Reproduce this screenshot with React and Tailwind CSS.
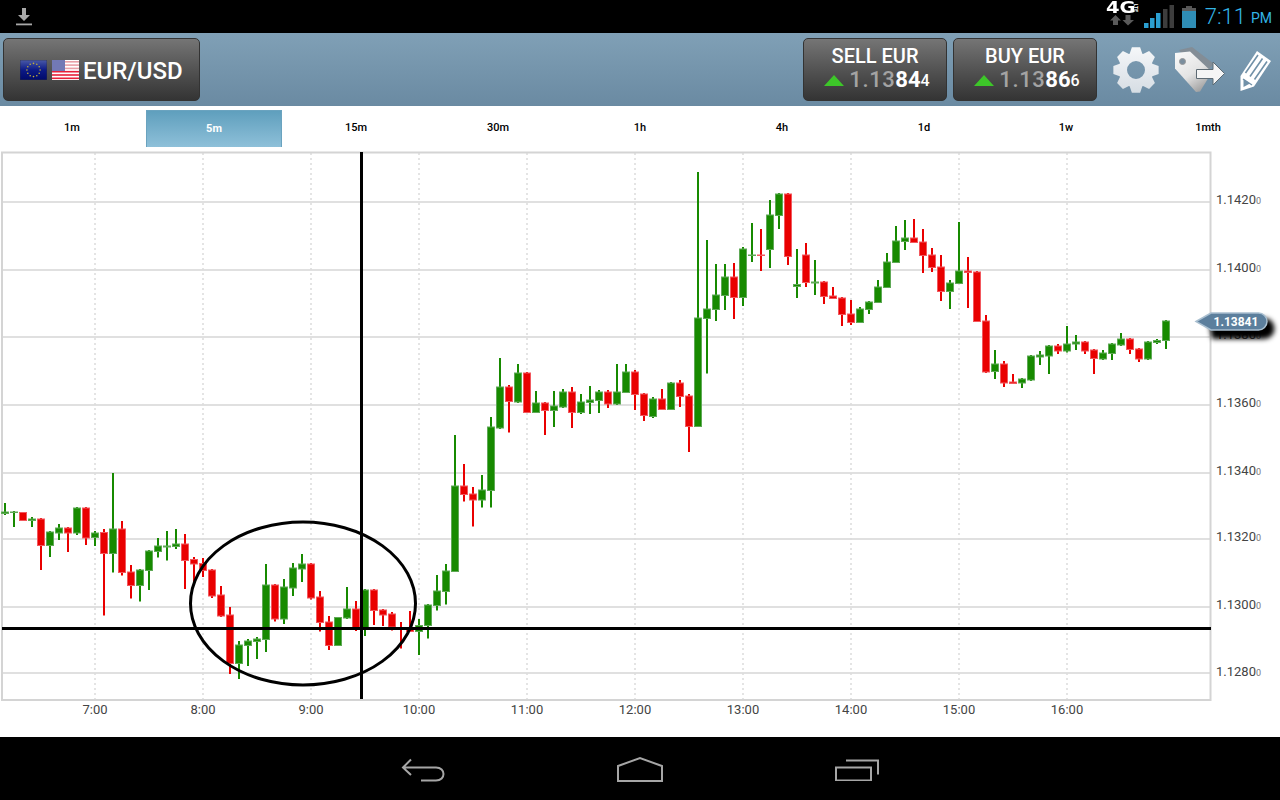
import React from "react";

const C = [
['g',503,511.5,514,515],['g',511,511.5,513,527],['r',512,512,521,521],['g',517,518.5,521,527],['r',518,518.5,546,570],
['g',531,531.5,546,557],['g',524,527.5,533.5,540],['r',527,527.5,533.5,552],['g',507,507.5,533.5,535],['r',507,507.5,538.5,545],
['g',531,532.5,538,546],['r',529,532,554,615.5],['g',473,528.5,554,572.5],['r',521,528.5,573,575.5],['r',565,571.5,586,598.5],
['g',569,569.5,586,601.5],['g',550,550.5,571,590],['g',538,545.5,552,557.5],['g',531,545.5,547.5,560.5],['g',529,543.5,547,549],
['r',534,543.5,561,589],['r',557,559,564.5,583],['r',558,563,571,577],['r',569,569.5,596.5,598],['r',586,594.5,616.5,617],
['r',607,614.5,664,674],['g',641,644.5,664,679],['g',639,640.5,646,666],['g',637,638.5,642,659],['g',564,584.5,640,652],
['r',584,584.5,619.5,621.5],['g',579,586.5,619.5,624],['g',563,567.5,588.5,596],['g',554,563.5,569.5,582],['r',563,563.5,598.5,599.5],
['r',591,596.5,623,631.5],['r',616,621.5,646,650],['g',617,617,646,646],['g',587,608.5,618.5,619],['r',601,608.5,630,631],
['g',589,589.5,630,636],['r',589,589.5,611,625],['r',609,609.5,615.5,626],['r',612,613.5,627.5,630.5],['r',622,627.5,628.5,648.5],
['r',611,627.5,632,632],['g',619,625,632,655],['g',604,604.5,626,638.5],['g',575,590.5,606,610.5],['g',564,570.5,592,604.5],
['g',435,485.5,572,572],['r',464,485.5,495,501.5],['r',487,493.5,500.5,526.5],['g',475,489.5,500.5,507.5],['g',417,426.5,491,507.5],
['g',358,386.5,428.5,429],['r',385,386.5,402,432.5],['g',364,372.5,402.5,403],['r',372,372.5,413,413],['g',391,402.5,413,413],
['r',402,402.5,411,435],['g',391,405.5,411,427],['g',389,391.5,407.5,408],['r',387,391.5,413,428],['g',394,401.5,413,414],
['g',386,399.5,403,414],['g',390,391.5,401,413],['r',390,391.5,404.5,408],['g',364,391.5,404.5,405],['g',364,371.5,393,393],
['r',370,371.5,395,410],['r',393,393.5,416,421],['g',397,398.5,417,418],['r',389,398.5,410,410],['g',382,382.5,410,410],
['r',380,382.5,397,407],['r',394,395.5,427,452],['g',172,317.5,427,427],['g',240,308.5,319,373.5],['g',264,294.5,310,321],
['g',264,276.5,296,310],['r',263,276.5,298,319],['g',247,248.5,298,306],['g',223,254.5,250,262],['r',229,254.5,250,271],
['g',200,214.5,250,268],['g',193,193.5,216,229],['r',193,193.5,257,265],['g',249,284,287,298],['r',243,254.5,283,287],
['g',260,281.5,283.5,295],['r',281,281.5,297,304],['r',287,295.5,299,299],['r',297,297.5,315,326],['r',300,313.5,323,325],
['g',307,308.5,323,323],['g',301,301.5,310,314],['g',280,286.5,303,303],['g',253,261.5,288,288],['g',226,240.5,263,263],
['g',220,237.5,242,250],['r',219,237.5,243,243],['r',229,241.5,256,273],['r',248,254.5,268,272],['r',255,266.5,292,301],
['g',280,282.5,292,309],['g',222,270.5,284,284],['r',257,270.5,273,308],['r',271,271.5,322,322],['r',315,320.5,372.5,373],
['g',350,363.5,372,379],['r',361,363.5,383.5,387],['r',374,381.5,384,384],['g',378,378.5,383.5,388],['g',355,355.5,380.5,381],
['g',351,354.5,357.5,365],['g',345,345.5,356.5,374],['r',344,345.5,351.5,354],['g',326,343.5,351.5,352.5],['g',335,341.5,344.5,350],
['r',341,341.5,351.5,354],['r',349,349.5,359,374],['g',350,352.5,359.5,360],['g',343,343.5,354,360],['g',333,338.5,345.5,346],
['r',338,338.5,350,354],['r',348,348.5,359.5,362],['g',341,341.5,359.5,360],['g',339,340,343,344],['g',320,320.5,341,349],
];

const H = [202, 270, 337, 405, 473, 539, 607, 673];
const YL = [["1.1420",199],["1.1400",267],["1.1380",334],["1.1360",402],["1.1340",470],["1.1320",536],["1.1300",604],["1.1280",671]];
const XL = ["7:00","8:00","9:00","10:00","11:00","12:00","13:00","14:00","15:00","16:00"];
const TABS = ["1m","5m","15m","30m","1h","4h","1d","1w","1mth"];

function gearPath(cx, cy) {
  const pts = [];
  const R = 23, r = 17.5;
  for (let i = 0; i < 8; i++) {
    const a = (i * Math.PI) / 4 - Math.PI / 2;
    const d = 0.29, e = 0.2;
    const seq = [[r, a - d - 0.08], [R, a - e + 0.02], [R, a + e - 0.02], [r, a + d + 0.08]];
    seq.forEach(([q, t]) => pts.push(`${(cx + q * Math.cos(t)).toFixed(2)} ${(cy + q * Math.sin(t)).toFixed(2)}`));
  }
  return `M${pts.join("L")}Z M${cx + 9} ${cy}a9 9 0 1 0 -18 0a9 9 0 1 0 18 0Z`;
}

function Chart() {
  return (
    <svg className="block h-[589px] w-[1280px]" viewBox="0 148 1280 589" fontFamily="Roboto, sans-serif">
      <defs>
        <filter id="badgeBlur" x="-30%" y="-60%" width="160%" height="220%">
          <feGaussianBlur stdDeviation="2.5" />
        </filter>
      </defs>
      {H.map((y) => <rect key={y} x="2" y={y - 1} width="1208" height="2" fill="#e0e0e0" />)}
      {XL.map((_, i) => (
        <line key={i} x1={95 + 108 * i} x2={95 + 108 * i} y1="153" y2="700" stroke="#dcdcdc" strokeWidth="1.5" strokeDasharray="2 3" />
      ))}
      <rect x="2" y="152.5" width="1208.5" height="547.5" fill="none" stroke="#d4d4d4" strokeWidth="2" />
      {C.map(([c, wt, bt, bb, wb], i) => {
        const fill = c === "g" ? "#178a00" : "#e90000";
        const edge = c === "g" ? "#5fa956" : "#f2585e";
        return (
          <g key={i}>
            <rect x={4 + 9 * i} y={wt} width="2" height={wb - wt} fill={fill} />
            <rect x={1.5 + 9 * i} y={bt + 0.5} width="7" height={Math.max(bb - bt - 1, 0.5)} fill={fill} stroke={edge} strokeWidth="1" />
          </g>
        );
      })}
      <rect x="2" y="627" width="1209" height="3" fill="#000" />
      <rect x="360" y="152" width="3" height="547" fill="#000" />
      <ellipse cx="303" cy="603.5" rx="112.5" ry="81.5" fill="none" stroke="#000" strokeWidth="3" />
      {XL.map((t, i) => (
        <text key={t} x={95 + 108 * i} y="714" textAnchor="middle" fontSize="13" fill="#444">{t}</text>
      ))}
      {YL.map(([t, y]) => (
        <text key={t} x="1216" y={y + 5} fontSize="13" fill="#444">{t}<tspan fontSize="9" fill="#777">0</tspan></text>
      ))}
      <path d="M1204 316h56a9 9 0 0 1 0 21h-52z" fill="#000" filter="url(#badgeBlur)" transform="translate(4 2)" />
      <path d="M1196 321.500L1211 313h47.500a8.500 8.500 0 0 1 0 17H1211z" fill="#5c7f9d" stroke="#a9bfd0" strokeWidth="1.5" />
      <text x="1236" y="326" textAnchor="middle" fontSize="12" fontWeight="700" fill="#fff">1.13841</text>
    </svg>
  );
}

function Flags() {
  const dots = [];
  for (let i = 0; i < 12; i++) {
    const a = (i * Math.PI) / 6;
    dots.push(<circle key={i} cx={13.5 + 6.6 * Math.cos(a)} cy={10 + 6.6 * Math.sin(a)} r="0.8" fill="#c2ae3a" />);
  }
  const stripes = [];
  for (let i = 0; i < 6; i++) stripes.push(<rect key={i} x="0" y={1 + i * 3.3} width="27" height="1.6" fill={i < 3 ? "#e8a0a8" : "#e8203a"} />);
  return (
    <div className="flex items-center gap-[5px]">
      <svg width="27" height="20" viewBox="0 0 27 20" className="block">
        <defs>
          <linearGradient id="eu" x1="0" y1="0" x2="0" y2="1">
            <stop offset="0" stopColor="#4a5aa8" />
            <stop offset="0.5" stopColor="#0c1a86" />
            <stop offset="1" stopColor="#000a6a" />
          </linearGradient>
        </defs>
        <rect width="27" height="20" fill="url(#eu)" stroke="#333" strokeWidth="0.6" />
        {dots}
      </svg>
      <svg width="27" height="20" viewBox="0 0 27 20" className="block">
        <rect width="27" height="20" fill="#fff" />
        {stripes}
        <rect x="0" y="0" width="13" height="11" fill="#8d92c4" />
        <rect x="0" y="0" width="13" height="11" fill="#4a55a0" opacity="0.4" />
      </svg>
    </div>
  );
}

function Price({ label, main, hi, tail }) {
  return (
    <div className="flex h-[63px] w-[144px] flex-col items-center rounded-[5px] border border-[#333] bg-linear-to-b from-[#757575] to-[#343434] pt-[5px] text-white">
      <div className="text-[20px] leading-[24px] font-medium">{label}</div>
      <div className="ml-[1px] flex items-end pl-[1px] leading-[24px]">
        <svg width="20" height="11" viewBox="0 0 20 11" className="mr-[5px] mb-[6px] ml-[2px] block">
          <path d="M10 0L20 11H0z" fill="#3dc729" />
        </svg>
        <span className="text-[22px] font-medium tracking-[0.6px] text-[#a3a3a3]">{main}</span>
        <span className="text-[22px] font-bold">{hi}</span>
        <span className="text-[16px] leading-[22px] font-medium">{tail}</span>
      </div>
    </div>
  );
}

function ToolIcons() {
  return (
    <svg className="block h-[60px] w-[183px]" viewBox="1097 40 183 60">
      <defs>
        <linearGradient id="gearG" x1="0" y1="0" x2="0" y2="1">
          <stop offset="0" stopColor="#f5f7f9" />
          <stop offset="1" stopColor="#d6dde4" />
        </linearGradient>
        <linearGradient id="tagG" x1="0" y1="0" x2="0.6" y2="1">
          <stop offset="0" stopColor="#fafafa" />
          <stop offset="0.6" stopColor="#e4e4e4" />
          <stop offset="1" stopColor="#a4a4a4" />
        </linearGradient>
      </defs>
      <path d={gearPath(1136, 70)} fill="url(#gearG)" fillRule="evenodd" />
      <path d="M1179 50L1192 47L1214 64L1200 78z" fill="#838d96" />
      <path d="M1175 53L1190 51.500L1212 72L1200 91.500L1196 92L1175 68.500z" fill="url(#tagG)" />
      <circle cx="1182.500" cy="61.500" r="3" fill="#7b8e9e" stroke="#999" />
      <path d="M1196.500 69.500H1213V62L1224.500 73.500L1213 85V78.500H1196.500z" fill="#f5f5f5" stroke="#5d6a73" strokeWidth="1" />
      <path d="M1240.500 91L1240.500 76L1257 51L1271 61L1254 86.500z" fill="#fff" />
      <path d="M1245.500 73L1258 55M1250 76.500L1262.500 58.500M1254.500 79.500L1267 61.500" stroke="#7191a8" strokeWidth="1.6" fill="none" />
      <path d="M1243.500 87L1243.500 79L1250 83.500z" fill="#7191a8" />
      <path d="M1243 79L1252 85" stroke="#7191a8" strokeWidth="1.4" />
    </svg>
  );
}

function StatusRight() {
  return (
    <div className="flex items-center">
      <div className="relative h-[33px] w-[36px]">
        <span className="absolute top-[1px] left-0 origin-left scale-x-[1.3] font-[DejaVu_Sans,sans-serif] text-[15px] leading-[15px] font-bold text-white">4G</span>
        <span className="absolute top-[5px] left-[26px] rotate-90 text-[5px] leading-[6px] font-bold text-white">LTE</span>
        <svg width="24" height="11" viewBox="0 0 24 11" className="absolute top-[15px] left-[4px] block">
          <path d="M5.500 0L11 5.500H8V10H3V5.500H0z" fill="#5a5a5a" />
          <path d="M15.500 0H20.500V5H24L18 10.500L12.500 5H15.500z" fill="#5a5a5a" />
        </svg>
      </div>
      <svg width="30" height="24" viewBox="0 0 30 24" className="ml-[2px] block">
        <rect x="0" y="18" width="4.500" height="5" fill="#2b9fd1" />
        <rect x="6" y="13" width="4.500" height="10" fill="#2b9fd1" />
        <rect x="12" y="8" width="4.500" height="15" fill="#2b9fd1" />
        <rect x="19" y="4" width="4.500" height="19" fill="#3d3d3d" />
        <rect x="25.500" y="0" width="4.500" height="23" fill="#3d3d3d" />
      </svg>
      <svg width="14" height="22" viewBox="0 0 14 22" className="ml-[8px] block">
        <rect x="4" y="0" width="6" height="3" fill="#555" />
        <rect x="0" y="2" width="14" height="20" fill="#2f8db5" />
        <rect x="0" y="2" width="14" height="3" fill="#5a5a5a" />
      </svg>
      <span className="ml-[9px] text-[22px] leading-[33px] font-light text-[#33b5e5]">7:11</span>
      <span className="mr-[8px] ml-[5px] pt-[4px] text-[14px] leading-[29px] text-[#33b5e5]">PM</span>
    </div>
  );
}

export default function App() {
  return (
    <div className="flex h-[800px] w-[1280px] flex-col overflow-hidden bg-white font-[Roboto,sans-serif]">
      <div className="flex h-[33px] items-center justify-between bg-black pl-[16px]">
        <svg width="16" height="18" viewBox="0 0 16 18" className="block">
          <path d="M6 0H10V7H14L8 13L2 7H6z" fill="#a8a8a8" />
          <rect x="0" y="15.500" width="16" height="1.800" fill="#a8a8a8" />
        </svg>
        <StatusRight />
      </div>

      <div className="flex h-[73px] items-center bg-linear-to-b from-[#80a0b6] to-[#6a8aa2] pl-[3px]">
        <div className="flex h-[63px] w-[197px] items-center rounded-[5px] border border-[#333] bg-linear-to-b from-[#757575] to-[#343434] pl-[16px]">
          <Flags />
          <span className="ml-[4px] pt-[3px] text-[24px] font-medium text-white">EUR/USD</span>
        </div>
        <div className="ml-auto flex gap-[6px]">
          <Price label="SELL EUR" main="1.13" hi="84" tail="4" />
          <Price label="BUY EUR" main="1.13" hi="86" tail="6" />
        </div>
        <ToolIcons />
      </div>

      <div className="grid h-[42px] grid-cols-9 px-[1px] pt-[4px] pb-[1px]">
        {TABS.map((t) => (
          <div key={t} className="flex items-center justify-center">
            {t === "5m" ? (
              <div className="flex h-full w-[136px] items-center justify-center border-t border-r border-l border-[#6aa3bf] bg-linear-to-b from-[#5f9fbd] to-[#8ec0d9] text-[11px] font-bold text-white">
                {t}
              </div>
            ) : (
              <span className="text-[11px] font-medium text-black">{t}</span>
            )}
          </div>
        ))}
      </div>

      <Chart />

      <div className="flex h-[63px] items-center justify-center bg-black">
        <div className="flex w-[216px] justify-center">
          <svg width="46" height="26" viewBox="0 0 46 26" className="block" fill="none" stroke="#a6a6a6" strokeWidth="2">
            <path d="M10 3.500L2 11.500L10 19M2 11.500H35C45 11.500 45 24.500 35 24.500H20" />
          </svg>
        </div>
        <div className="flex w-[216px] justify-center">
          <svg width="48" height="26" viewBox="0 0 48 26" className="block" fill="none" stroke="#a6a6a6" strokeWidth="2">
            <path d="M2 25V10L24 2L46 10V25z" />
          </svg>
        </div>
        <div className="flex w-[216px] justify-center">
          <svg width="46" height="24" viewBox="0 0 46 24" className="block" fill="none" stroke="#a6a6a6" strokeWidth="2">
            <rect x="3" y="10.500" width="35" height="13" />
            <path d="M13 3.500H45V17.500" />
          </svg>
        </div>
      </div>
    </div>
  );
}
